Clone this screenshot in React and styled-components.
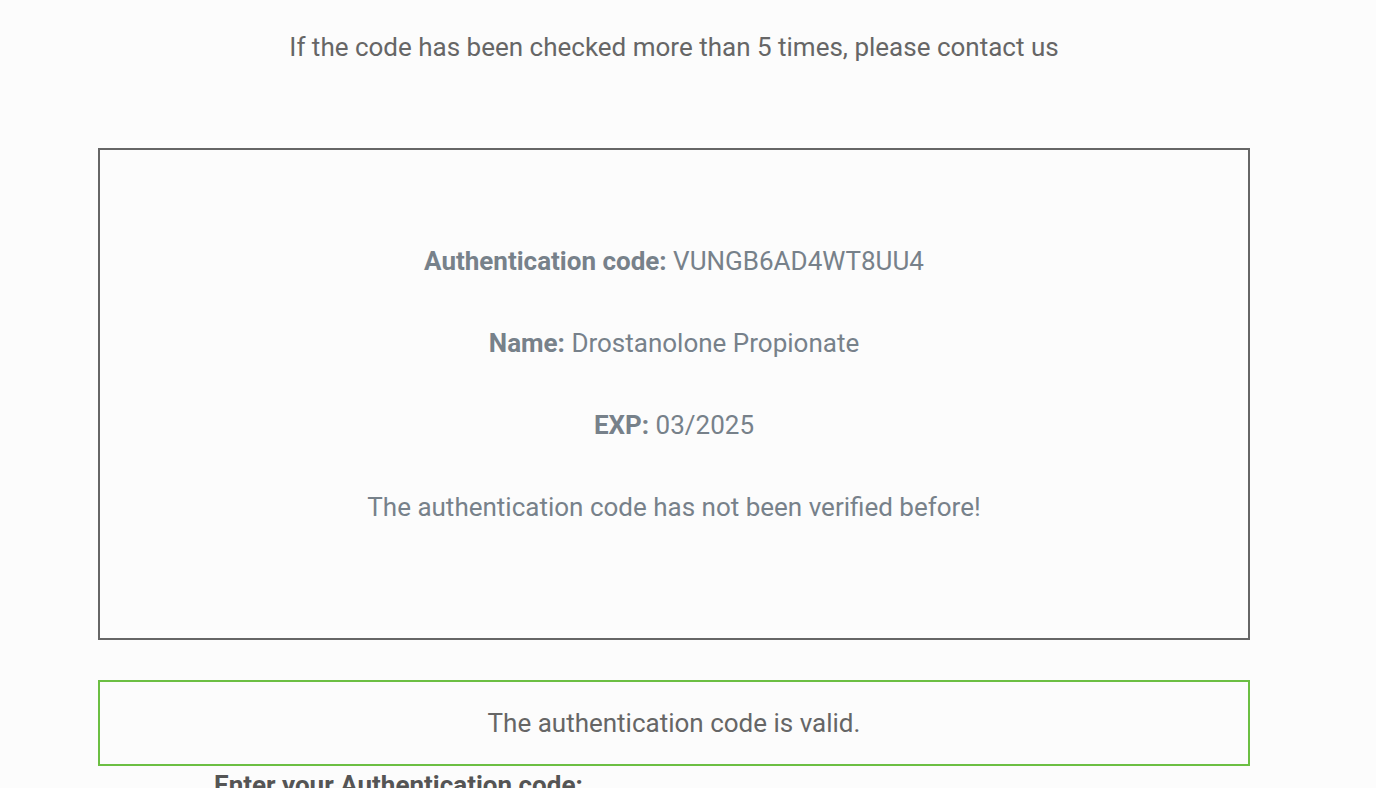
import React from "react";
import styled, { createGlobalStyle } from "styled-components";

const Global = createGlobalStyle`
  html, body { margin: 0; padding: 0; background: #fcfcfc; }
  body { font-family: Roboto, "Liberation Sans", Arial, sans-serif; overflow: hidden; }
`;

const Page = styled.div`
  width: 1152px;
  margin-left: 98px;
  padding-top: 30px;
  display: flex;
  flex-direction: column;
`;

const Notice = styled.p`
  margin: 0;
  font-size: 26px;
  line-height: 34px;
  color: #666666;
  text-align: center;
`;

const ResultBox = styled.div`
  margin-top: 84px;
  border: 2px solid #666666;
  padding: 94px 20px 114px;
  display: flex;
  flex-direction: column;
  gap: 48px;
  align-items: center;
`;

const InfoLine = styled.p`
  margin: 0;
  font-size: 26px;
  line-height: 34px;
  color: #77818a;
  text-align: center;
  b { font-weight: 700; }
`;

const StatusBox = styled.div`
  margin-top: 40px;
  border: 2px solid #6cbf43;
  padding: 24px 20px;
  text-align: center;
  font-size: 26px;
  line-height: 34px;
  color: #666666;
`;

const Form = styled.form`
  margin-top: 2px;
  padding-left: 116px;
`;

const Label = styled.label`
  display: block;
  font-size: 26px;
  line-height: 34px;
  font-weight: 700;
  color: #555555;
`;

export default function App() {
  return (
    <>
      <Global />
      <Page>
        <Notice>If the code has been checked more than 5 times, please contact us</Notice>
        <ResultBox>
          <InfoLine><b>Authentication code:</b> VUNGB6AD4WT8UU4</InfoLine>
          <InfoLine><b>Name:</b> Drostanolone Propionate</InfoLine>
          <InfoLine><b>EXP:</b> 03/2025</InfoLine>
          <InfoLine>The authentication code has not been verified before!</InfoLine>
        </ResultBox>
        <StatusBox>The authentication code is valid.</StatusBox>
        <Form>
          <Label>Enter your Authentication code:</Label>
        </Form>
      </Page>
    </>
  );
}
